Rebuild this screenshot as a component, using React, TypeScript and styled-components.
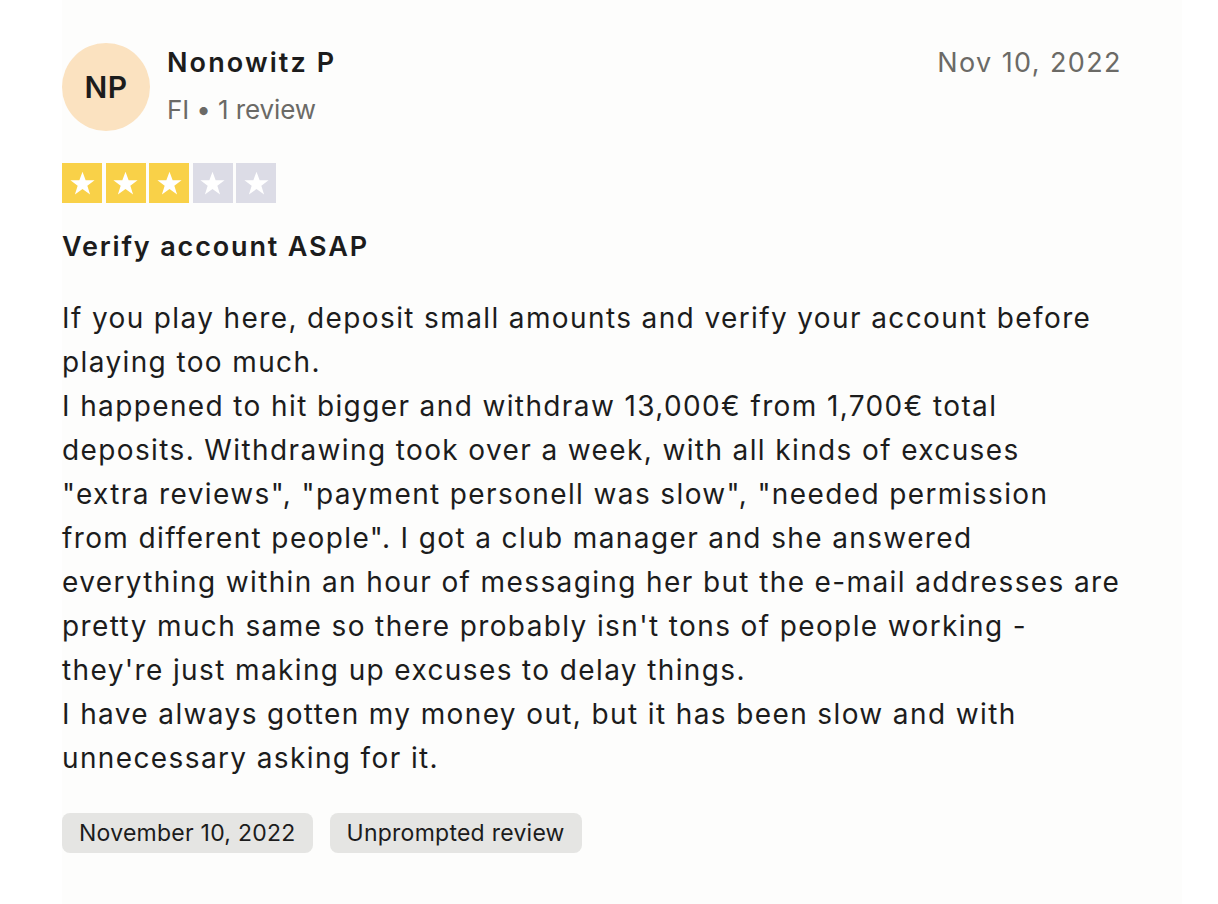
import React from "react";
import styled, { createGlobalStyle } from "styled-components";

const Global = createGlobalStyle`
  html, body { margin: 0; padding: 0; background: #ffffff; }
  body { font-family: Inter, "Liberation Sans", sans-serif; color: #1c1c1c; }
`;

const Card = styled.article`
  width: 1120px;
  margin-left: 62px;
  padding: 43px 0 51px 0;
  background: #fdfdfc;
  box-sizing: border-box;
  min-height: 904px;
`;

const Header = styled.header`
  display: flex;
  align-items: flex-start;
  justify-content: space-between;
  padding-right: 60px;
`;

const Consumer = styled.div`
  display: flex;
  align-items: flex-start;
  gap: 17px;
`;

const Avatar = styled.div`
  width: 88px;
  height: 88px;
  border-radius: 50%;
  background: #fbe2c0;
  display: flex;
  align-items: center;
  justify-content: center;
  font-size: 30px;
  font-weight: 600;
  color: #1c1c1c;
  letter-spacing: 0.5px;
`;

const Names = styled.div`
  display: flex;
  flex-direction: column;
  gap: 7px;
`;

const Name = styled.div`
  font-size: 27px;
  font-weight: 600;
  line-height: 40px;
  letter-spacing: 2.1px;
  color: #1c1c1c;
`;

const Meta = styled.div`
  font-size: 26px;
  line-height: 40px;
  letter-spacing: -0.1px;
  color: #6b6a66;
`;

const PostDate = styled.time`
  font-size: 27px;
  line-height: 40px;
  color: #6b6a66;
  letter-spacing: 1.4px;
`;

const Stars = styled.div`
  display: flex;
  gap: 3.5px;
  margin-top: 32px;
`;

const StarBox = styled.span<{ $on: boolean }>`
  width: 40px;
  height: 40px;
  background: ${(p) => (p.$on ? "#f9d148" : "#dcdce6")};
  display: flex;
  align-items: center;
  justify-content: center;
`;

const Title = styled.h2`
  margin: 26px 0 0 0;
  font-size: 27px;
  font-weight: 600;
  line-height: 36px;
  letter-spacing: 1.85px;
  color: #1c1c1c;
`;

const Body = styled.div`
  margin-top: 31px;
  font-size: 28px;
  line-height: 44px;
  letter-spacing: 1.38px;
  color: #1c1c1c;
`;

const Line = styled.div`
  white-space: nowrap;
`;

const Tags = styled.div`
  display: flex;
  gap: 17px;
  margin-top: 33px;
`;

const Tag = styled.span`
  height: 40px;
  padding: 0 17px;
  border-radius: 8px;
  background: #e5e5e3;
  display: inline-flex;
  align-items: center;
  font-size: 23px;
  letter-spacing: 0.25px;
  color: #1c1c1c;
`;

const Star = () => (
  <svg width="29" height="29" viewBox="0 0 24 24" aria-hidden>
    <path
      d="M12 2.2l2.6 7.1h7.4l-6 4.5 2.3 7.2L12 16.6l-6.3 4.4 2.3-7.2-6-4.5h7.4z"
      fill="#ffffff"
    />
  </svg>
);

const lines = [
  "If you play here, deposit small amounts and verify your account before",
  "playing too much.",
  "I happened to hit bigger and withdraw 13,000€ from 1,700€ total",
  "deposits. Withdrawing took over a week, with all kinds of excuses",
  "\"extra reviews\", \"payment personell was slow\", \"needed permission",
  "from different people\". I got a club manager and she answered",
  "everything within an hour of messaging her but the e-mail addresses are",
  "pretty much same so there probably isn't tons of people working -",
  "they're just making up excuses to delay things.",
  "I have always gotten my money out, but it has been slow and with",
  "unnecessary asking for it.",
];

export default function App() {
  const rating = 3;
  return (
    <>
      <Global />
      <Card>
        <Header>
          <Consumer>
            <Avatar>NP</Avatar>
            <Names>
              <Name>Nonowitz P</Name>
              <Meta>FI • 1 review</Meta>
            </Names>
          </Consumer>
          <PostDate>Nov 10, 2022</PostDate>
        </Header>
        <Stars>
          {[0, 1, 2, 3, 4].map((i) => (
            <StarBox key={i} $on={i < rating}>
              <Star />
            </StarBox>
          ))}
        </Stars>
        <Title>Verify account ASAP</Title>
        <Body>
          {lines.map((l, i) => (
            <Line key={i}>{l}</Line>
          ))}
        </Body>
        <Tags>
          <Tag>November 10, 2022</Tag>
          <Tag>Unprompted review</Tag>
        </Tags>
      </Card>
    </>
  );
}
